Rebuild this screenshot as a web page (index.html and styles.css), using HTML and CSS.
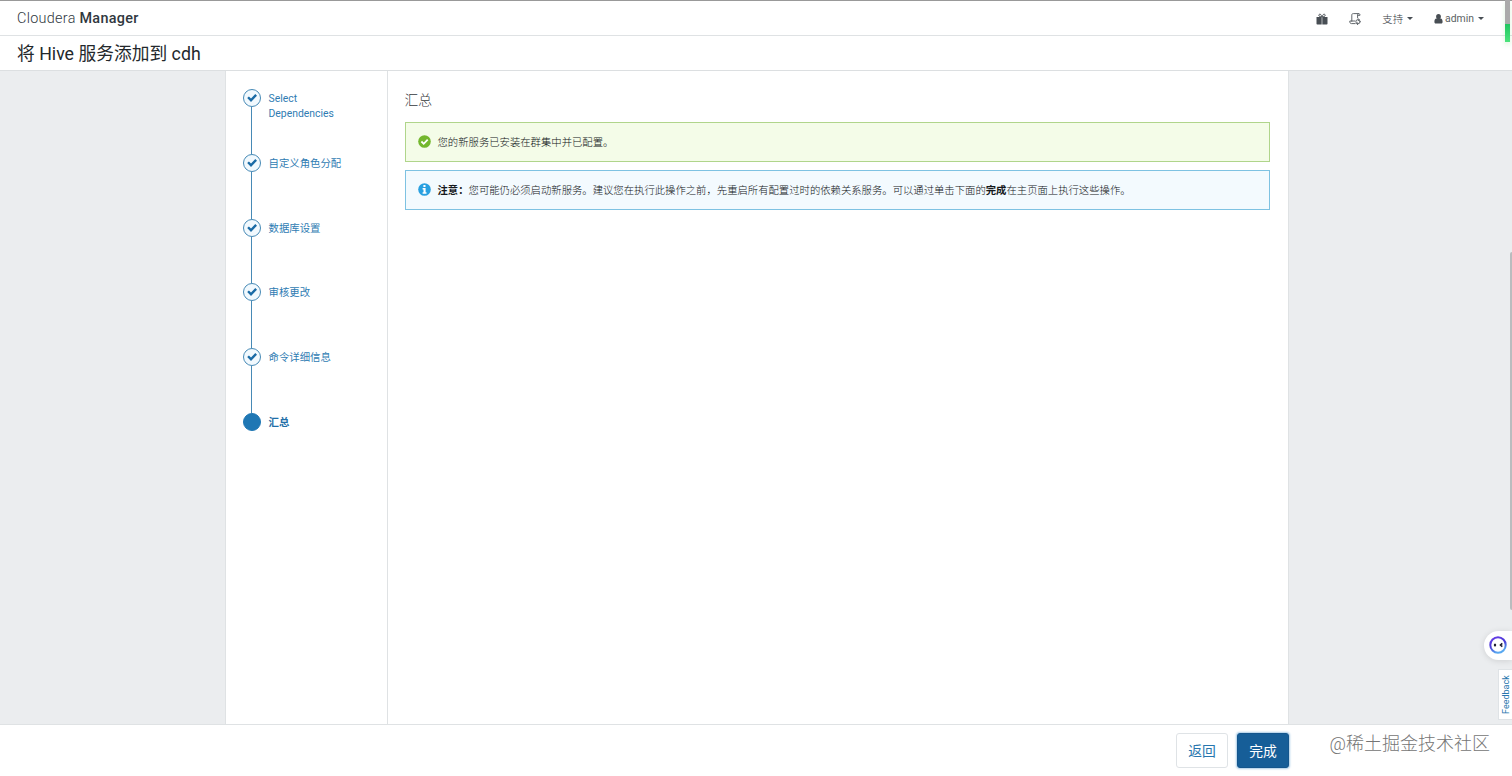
FILE: index.html
```html
<!DOCTYPE html>
<html lang="zh-CN">
<head>
    <meta charset="UTF-8">
    <meta name="viewport" content="width=device-width, initial-scale=1.0">
    <title>将 Hive 服务添加到 cdh - Cloudera Manager</title>
    <link rel="stylesheet" href="styles.css">
</head>
<body>

<svg width="0" height="0" class="icon-defs">
    <symbol id="check" viewBox="0 0 12 12">
        <path d="M1.2 6.1 2.9 4.5 5 6.6 9.3 2.1 11 3.8 5 9.9z"/>
    </symbol>
</svg>

<header class="navbar">
    <div class="brand">Cloudera <b>Manager</b></div>
    <nav class="nav-right">
        <a class="nav-parcels">
            <svg width="12" height="12" viewBox="0 0 12 12">
                <path fill="#484e54" d="M.5 4h5.2v7.5H1.3a.8.8 0 0 1-.8-.8zM6.3 4h5.2v6.7a.8.8 0 0 1-.8.8H6.3z"/>
                <path fill="none" stroke="#484e54" d="M5.8 3.8C3.2 3.8 2.7 2.9 2.9 2 3.3.7 5.1.7 5.8 3.8zM6.2 3.8c2.6 0 3.1-.9 2.9-1.8C8.7.7 6.9.7 6.2 3.8z"/>
            </svg>
        </a>
        <a class="nav-commands">
            <svg width="12" height="12" viewBox="0 0 12 12" fill="none" stroke="#62676c" stroke-linecap="round" stroke-linejoin="round">
                <path d="M2.8 8V2.1C2.8 1 3.3.6 4.3.6h5.5c-1 0-1.2.5-1.2 1.3v2.8M9.8.6c.9 0 1.2.6 1.2 1.7H8.8M2.8 8H.8c0 1.9.4 2.6 1.6 2.6h3.8M2.8 8h3.1"/>
                <circle cx="9" cy="8.7" r="2.1"/>
                <path d="M9.2 5.6 10.4 6.8 9.2 7.6M8.8 11.7 7.6 10.6 8.8 9.8"/>
            </svg>
        </a>
        <a class="nav-support">支持<span class="caret"></span></a>
        <a class="nav-user">
            <svg width="9" height="10" viewBox="0 0 9 10">
                <path fill="#484e54" d="M4.5 0a2.4 2.6 0 1 1 0 5.2 2.4 2.6 0 0 1 0-5.2zM.4 8.1c0-2.1.6-3.4 2-3.5.9 1 3.3 1 4.2 0 1.4.1 2 1.4 2 3.5 0 .9-.5 1.5-1.4 1.5H1.8C.9 9.6.4 9 .4 8.1z"/>
            </svg>
            admin<span class="caret"></span></a>
    </nav>
</header>

<h1 class="page-title">将 Hive 服务添加到 cdh</h1>

<main class="page-body">
    <div class="wizard">
        <ul class="steps">
            <li class="step">
                <span class="dot"><svg width="12" height="12"><use href="#check"/></svg></span>
                <span class="step-label">Select Dependencies</span>
            </li>
            <li class="step">
                <span class="dot"><svg width="12" height="12"><use href="#check"/></svg></span>
                <span class="step-label">自定义角色分配</span>
            </li>
            <li class="step">
                <span class="dot"><svg width="12" height="12"><use href="#check"/></svg></span>
                <span class="step-label">数据库设置</span>
            </li>
            <li class="step">
                <span class="dot"><svg width="12" height="12"><use href="#check"/></svg></span>
                <span class="step-label">审核更改</span>
            </li>
            <li class="step">
                <span class="dot"><svg width="12" height="12"><use href="#check"/></svg></span>
                <span class="step-label">命令详细信息</span>
            </li>
            <li class="step active">
                <span class="dot"></span>
                <span class="step-label">汇总</span>
            </li>
        </ul>

        <section class="content">
            <h2>汇总</h2>
            <div class="alert alert-success">
                <svg width="13" height="13" viewBox="0 0 13 13">
                    <circle cx="6.5" cy="6.5" r="6.3" fill="#74b72e"/>
                    <path d="M3.4 6.5 5.7 8.8 9.7 4.7" fill="none" stroke="#fff" stroke-width="1.8"/>
                </svg>
                <div>您的新服务已安装在群集中并已配置。</div>
            </div>
            <div class="alert alert-info">
                <svg width="13" height="13" viewBox="0 0 13 13">
                    <circle cx="6.5" cy="6.5" r="6.3" fill="#29a0e0"/>
                    <path fill="#fff" d="M5.4 2h2.1v1.9H5.4zM4.6 5h3v4.3h.9v1.4H4.6V9.3h.9V6.4h-.9z"/>
                </svg>
                <div><b>注意：</b>您可能仍必须启动新服务。建议您在执行此操作之前，先重启所有配置过时的依赖关系服务。可以通过单击下面的<b>完成</b>在主页面上执行这些操作。</div>
            </div>
        </section>
    </div>
</main>

<footer class="footer">
    <button type="button" class="btn">返回</button>
    <button type="button" class="btn btn-primary">完成</button>
</footer>

<!-- Things that float over the page -->
<div class="top-scroll"></div>
<div class="side-scroll"></div>
<div class="assistant">
    <svg width="18" height="18" viewBox="0 0 18 18">
        <defs>
            <linearGradient id="ring" x1="0" y1="0" x2="0.4" y2="1">
                <stop offset="0" stop-color="#6a3de8"/>
                <stop offset="0.55" stop-color="#493bd6"/>
                <stop offset="1" stop-color="#58a8f0"/>
            </linearGradient>
        </defs>
        <circle cx="9" cy="9" r="7.7" fill="#fff" stroke="url(#ring)" stroke-width="2"/>
        <ellipse cx="6" cy="9" rx="1.2" ry="1.6" fill="#1c1c30"/>
        <path d="M13.3 7.4 11.5 9l1.8 1.6" fill="none" stroke="#1c1c30" stroke-width="1.6"/>
    </svg>
</div>
<div class="feedback">Feedback</div>
<div class="watermark">@稀土掘金技术社区</div>

</body>
</html>
```

FILE: styles.css
```css
* {
    box-sizing: border-box;
}

body {
    display: flex;
    flex-direction: column;
    height: 100vh;
    margin: 0;
    overflow: hidden;
    font-family: Roboto, "Noto Sans CJK SC", sans-serif;
    font-size: 10.4px;
    color: #35393d;
    background-color: #fff;
}

.icon-defs {
    position: absolute;
}

.navbar {
    display: flex;
    justify-content: space-between;
    align-items: center;
    height: 36px;
    padding: 0 28px 0 17px;
    border-top: 1px solid #999;
    border-bottom: 1px solid #dfe2e4;
}

.brand {
    font-size: 14.4px;
    font-weight: 300;
    letter-spacing: 0.3px;
    color: #30383e;
}

.brand b {
    font-weight: 500;
}

.nav-right {
    display: flex;
    align-items: center;
    padding-top: 1px;
    color: #5a5f64;
}

.nav-right a {
    display: flex;
    align-items: center;
}

.nav-parcels {
    margin-right: 21px;
}

.nav-commands {
    margin-right: 21px;
}

.nav-support {
    margin-right: 21px;
    font-weight: 300;
    color: #33383d;
}

.nav-user svg {
    margin-right: 2px;
}

.caret {
    margin-left: 4px;
    border-top: 3px solid #484e54;
    border-left: 3px solid transparent;
    border-right: 3px solid transparent;
}

.page-title {
    height: 35px;
    margin: 0;
    padding: 1px 0 0 17px;
    border-bottom: 1px solid #dcdfe1;
    font-size: 17.75px;
    font-weight: 400;
    line-height: 35px;
    color: #23282c;
}

.page-body {
    display: flex;
    flex: 1;
    justify-content: center;
    background-color: #ebedef;
}

.wizard {
    display: flex;
    width: 1064px;
    margin-left: 1px;
    border-left: 1px solid #dfe2e4;
    border-right: 1px solid #dfe2e4;
    background-color: #fff;
}

.steps {
    width: 162px;
    margin: 0;
    padding: 18px 17px;
    border-right: 1px solid #dfe2e4;
    list-style: none;
}

.step {
    position: relative;
    display: flex;
    height: 64.8px;
    color: #2f7cb3;
}

.step:not(:last-child)::before {
    content: "";
    position: absolute;
    left: 8px;
    top: 18px;
    bottom: 0;
    width: 1px;
    background-color: #478ab6;
}

.dot {
    display: flex;
    flex: none;
    align-items: center;
    justify-content: center;
    width: 18px;
    height: 18px;
    margin-right: 8px;
    border: 1px solid #478ab6;
    border-radius: 50%;
    background-color: #f1f9fe;
    fill: #1a6ba6;
}

.step-label {
    width: 75px;
    padding-top: 2px;
    line-height: 15px;
}

.active .dot {
    border-color: #1f77b4;
    background-color: #1f77b4;
}

.active .step-label {
    font-weight: 700;
    color: #1f6fa8;
}

.content {
    flex: 1;
    padding: 19px 18px 0 17px;
}

.content h2 {
    margin: 0 0 12px;
    font-size: 13.8px;
    font-weight: 300;
    line-height: 20px;
}

.alert {
    display: flex;
    align-items: center;
    height: 40px;
    margin-bottom: 8px;
    padding: 0 0 1px 12px;
    border: 1px solid;
    font-size: 10.35px;
    font-weight: 300;
    color: #101417;
    white-space: nowrap;
}

.alert svg {
    margin-right: 7px;
}

.alert b {
    font-weight: 700;
    color: #16191c;
}

.alert-success {
    border-color: #b0d58b;
    background-color: #f4fce8;
}

.alert-info {
    border-color: #7ec2e2;
    background-color: #f3fafe;
}

.footer {
    display: flex;
    justify-content: flex-end;
    height: 52px;
    padding: 8px 223px 0 0;
    border-top: 1px solid #dfe2e4;
}

.btn {
    width: 52px;
    height: 35px;
    margin-left: 9px;
    padding: 0 0 2px;
    border: 1px solid #dfe3e6;
    border-radius: 3px;
    font-family: inherit;
    font-size: 13.8px;
    color: #2876ae;
    background-color: #fff;
}

.btn-primary {
    border-color: #14568d;
    color: #fff;
    background-color: #165e98;
    box-shadow: 0 0 2px 1px #a9cce7;
}

.top-scroll {
    position: absolute;
    top: 0;
    right: 2px;
    width: 5px;
    height: 42px;
    background: linear-gradient(#aaa 24px, #1fc55f 24px, #4be37c);
    box-shadow: 0 3px 5px rgba(120, 220, 120, 0.25);
}

.side-scroll {
    position: absolute;
    top: 252px;
    right: 0;
    width: 2px;
    height: 358px;
    border-radius: 2px 0 0 2px;
    background-color: #b9bcbe;
}

.assistant {
    position: absolute;
    top: 631px;
    right: 0;
    display: flex;
    align-items: center;
    width: 28px;
    height: 29px;
    padding: 0 0 1px 5px;
    border-radius: 15px 0 0 15px;
    background-color: #fff;
    box-shadow: 0 1px 6px rgba(0, 0, 0, 0.12);
}

.feedback {
    position: absolute;
    top: 669px;
    right: 0;
    width: 14px;
    height: 51px;
    padding-right: 2px;
    border: 1px solid #dfe3e6;
    border-left: none;
    font-size: 9px;
    line-height: 10px;
    text-align: center;
    color: #2876ae;
    background-color: #fff;
    writing-mode: vertical-rl;
    rotate: 180deg;
}

.watermark {
    position: absolute;
    top: 731px;
    right: 22px;
    font-size: 18px;
    font-weight: 300;
    line-height: 25px;
    color: #757575;
}
```
